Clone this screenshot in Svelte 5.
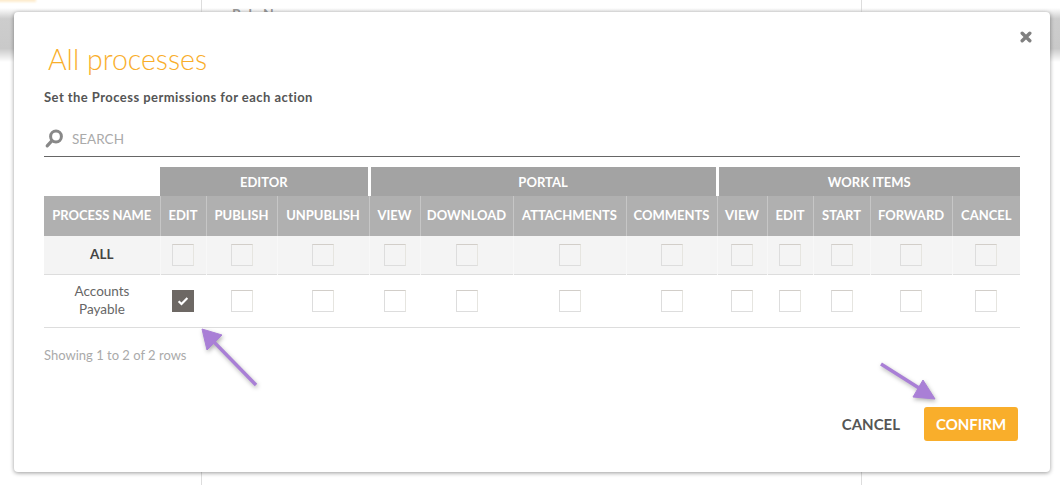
<script>
  const cols = [
    { label: 'PROCESS NAME', w: 116 },
    { label: 'EDIT', w: 46 },
    { label: 'PUBLISH', w: 71 },
    { label: 'UNPUBLISH', w: 92 },
    { label: 'VIEW', w: 51 },
    { label: 'DOWNLOAD', w: 93 },
    { label: 'ATTACHMENTS', w: 113 },
    { label: 'COMMENTS', w: 91 },
    { label: 'VIEW', w: 50 },
    { label: 'EDIT', w: 46 },
    { label: 'START', w: 57 },
    { label: 'FORWARD', w: 82 },
    { label: 'CANCEL', w: 68 }
  ];
  const groups = [
    { label: 'EDITOR', span: 3 },
    { label: 'PORTAL', span: 4 },
    { label: 'WORK ITEMS', span: 5 }
  ];
  const perms = cols.slice(1);
</script>

<div class="page">
  <div class="orange-tab"></div>
  <div class="band"></div>
  <div class="columns">
    <div class="side"></div>
    <div class="main"><span class="role">Role Name</span></div>
    <div class="side"></div>
  </div>

  <div class="modal">
    <button class="close" aria-label="Close">
      <svg width="12" height="12" viewBox="0 0 12 12">
        <path d="M2.2 2.2L9.8 9.8M9.8 2.2L2.2 9.8" stroke="#808080" stroke-width="3.4" stroke-linecap="round" />
      </svg>
    </button>

    <h2>All processes</h2>
    <p class="sub">Set the Process permissions for each action</p>

    <div class="search">
      <svg width="20" height="20" viewBox="0 0 20 20">
        <circle cx="12" cy="7.5" r="5.4" fill="none" stroke="#888" stroke-width="3" />
        <path d="M8 11.6L3.2 16.8" stroke="#888" stroke-width="3.2" stroke-linecap="round" />
      </svg>
      <span>SEARCH</span>
    </div>

    <table>
      <colgroup>
        {#each cols as c}
          <col style="width:{c.w}px" />
        {/each}
      </colgroup>
      <thead>
        <tr class="groups">
          <th class="blank"></th>
          {#each groups as g}
            <th colspan={g.span}>{g.label}</th>
          {/each}
        </tr>
        <tr class="heads">
          {#each cols as c}
            <th>{c.label}</th>
          {/each}
        </tr>
      </thead>
      <tbody>
        <tr class="all">
          <td class="name">ALL</td>
          {#each perms as p}
            <td><span class="box"></span></td>
          {/each}
        </tr>
        <tr class="row">
          <td class="name">Accounts<br />Payable</td>
          {#each perms as p, i}
            <td>
              <span class="box" class:checked={i === 0}>
                {#if i === 0}
                  <svg width="12" height="10" viewBox="0 0 12 10">
                    <path d="M1.6 5.2L4.5 8L10.4 2" fill="none" stroke="#fff" stroke-width="2.2" />
                  </svg>
                {/if}
              </span>
            </td>
          {/each}
        </tr>
      </tbody>
    </table>

    <p class="rows">Showing 1 to 2 of 2 rows</p>

    <div class="actions">
      <button class="cancel">CANCEL</button>
      <button class="confirm">CONFIRM</button>
    </div>

    <svg class="arrows" width="1036" height="460" viewBox="0 0 1036 460">
      <g fill="#a97fd6" stroke="#a97fd6" stroke-linejoin="round" class="arrow">
        <path d="M188 317L208 323L193 338Z" stroke-width="1" />
        <path d="M199 329L242 373" stroke-width="3.4" fill="none" />
        <path d="M921 387L909 368L899 385Z" stroke-width="1" />
        <path d="M905 376L867 352" stroke-width="3.4" fill="none" />
      </g>
    </svg>
  </div>
</div>

<style>
  :global(body) {
    margin: 0;
    background: #fff;
  }
  .page {
    position: relative;
    width: 1060px;
    height: 485px;
    overflow: hidden;
    background: #fff;
    font-family: Lato, "Liberation Sans", sans-serif;
    color: #555;
  }
  .columns {
    position: relative;
    display: flex;
    height: 100%;
  }
  .side {
    width: 201px;
  }
  .side:last-child {
    flex: 1;
  }
  .main {
    width: 661px;
    box-sizing: border-box;
    border-left: 1px solid #ddd;
    border-right: 1px solid #ddd;
    padding: 5px 30px;
    font-size: 14px;
    font-weight: 700;
    color: #999;
  }
  .orange-tab {
    position: absolute;
    left: -4px;
    top: -3px;
    width: 40px;
    height: 5px;
    background: #fdeccd;
    filter: blur(1px);
  }
  .band {
    position: absolute;
    left: 0;
    right: 0;
    top: 8px;
    height: 54px;
    background: linear-gradient(#fff, #cdcdcd 20%, #c9c9c9 75%, #fff);
  }
  .modal {
    position: absolute;
    left: 14px;
    top: 12px;
    box-sizing: border-box;
    width: 1036px;
    height: 460px;
    padding: 0 30px;
    background: #fff;
    border-radius: 4px;
    box-shadow: 0 1px 4px rgba(0, 0, 0, 0.4);
  }
  .close {
    position: absolute;
    right: 18px;
    top: 19px;
    padding: 0;
    border: 0;
    background: none;
    display: flex;
  }
  h2 {
    margin: 31px 0 0 4px;
    font-size: 28.5px;
    line-height: 32px;
    font-weight: 300;
    color: #f9ae2b;
  }
  .sub {
    margin: 14px 0 0;
    font-size: 13px;
    line-height: 16px;
    letter-spacing: 0.45px;
    font-weight: 700;
    color: #555;
  }
  .search {
    display: flex;
    align-items: center;
    gap: 8px;
    height: 35px;
    margin-top: 16px;
    border-bottom: 1px solid #666;
    font-size: 13.5px;
    color: #aaa;
  }
  table {
    width: 976px;
    margin-top: 10px;
    border-collapse: collapse;
    table-layout: fixed;
    text-align: center;
  }
  th {
    padding: 0;
    color: #fff;
    font-size: 13px;
    font-weight: 700;
  }
  .groups th {
    height: 29px;
    background: #a3a3a3;
    border-left: 3px solid #fff;
  }
  .groups th:nth-child(2) {
    border-left: 0;
  }
  .groups .blank {
    background: #fff;
    border: 0;
  }
  .heads th {
    height: 38px;
    padding-bottom: 2px;
    background: #b0b0b0;
    border-left: 1px solid #c6c6c6;
  }
  .heads th:first-child {
    border-left: 0;
  }
  td {
    padding: 0;
    font-size: 13.5px;
  }
  .all {
    background: #f4f4f4;
    border-bottom: 1px solid #ddd;
  }
  .all td {
    height: 38px;
    border-left: 1px solid #f8f8f8;
  }
  .all td:first-child {
    border-left: 0;
  }
  .all .name {
    height: 35px;
    padding-bottom: 3px;
    font-weight: 700;
    color: #444;
  }
  .row {
    border-bottom: 1px solid #ddd;
  }
  .row td {
    height: 52px;
    line-height: 18px;
  }
  .row .name {
    height: 50px;
    padding-bottom: 2px;
    color: #666;
  }
  .box {
    display: inline-flex;
    align-items: center;
    justify-content: center;
    box-sizing: border-box;
    width: 22px;
    height: 22px;
    vertical-align: middle;
    border: 1px solid #ddd;
    border-top-color: #d2cec9;
    border-right-color: #e6e5e0;
  }
  .box.checked {
    background: #6d6864;
    border-color: #6d6864;
  }
  .rows {
    margin: 19px 0 0;
    font-size: 13px;
    line-height: 16px;
    color: #aaa;
  }
  .actions {
    display: flex;
    justify-content: flex-end;
    align-items: center;
    gap: 24px;
    margin: 44px 2px 0 0;
  }
  .actions button {
    padding: 0;
    border: 0;
    background: none;
    font: 700 15px Lato, "Liberation Sans", sans-serif;
    color: #555;
  }
  .actions .confirm {
    width: 94px;
    height: 34px;
    border-radius: 3px;
    background: #f9ae2b;
    color: #fff;
  }
  .arrows {
    position: absolute;
    left: 0;
    top: 0;
    pointer-events: none;
  }
  .arrow {
    filter: drop-shadow(1px 2px 2px rgba(0, 0, 0, 0.3));
  }
</style>
